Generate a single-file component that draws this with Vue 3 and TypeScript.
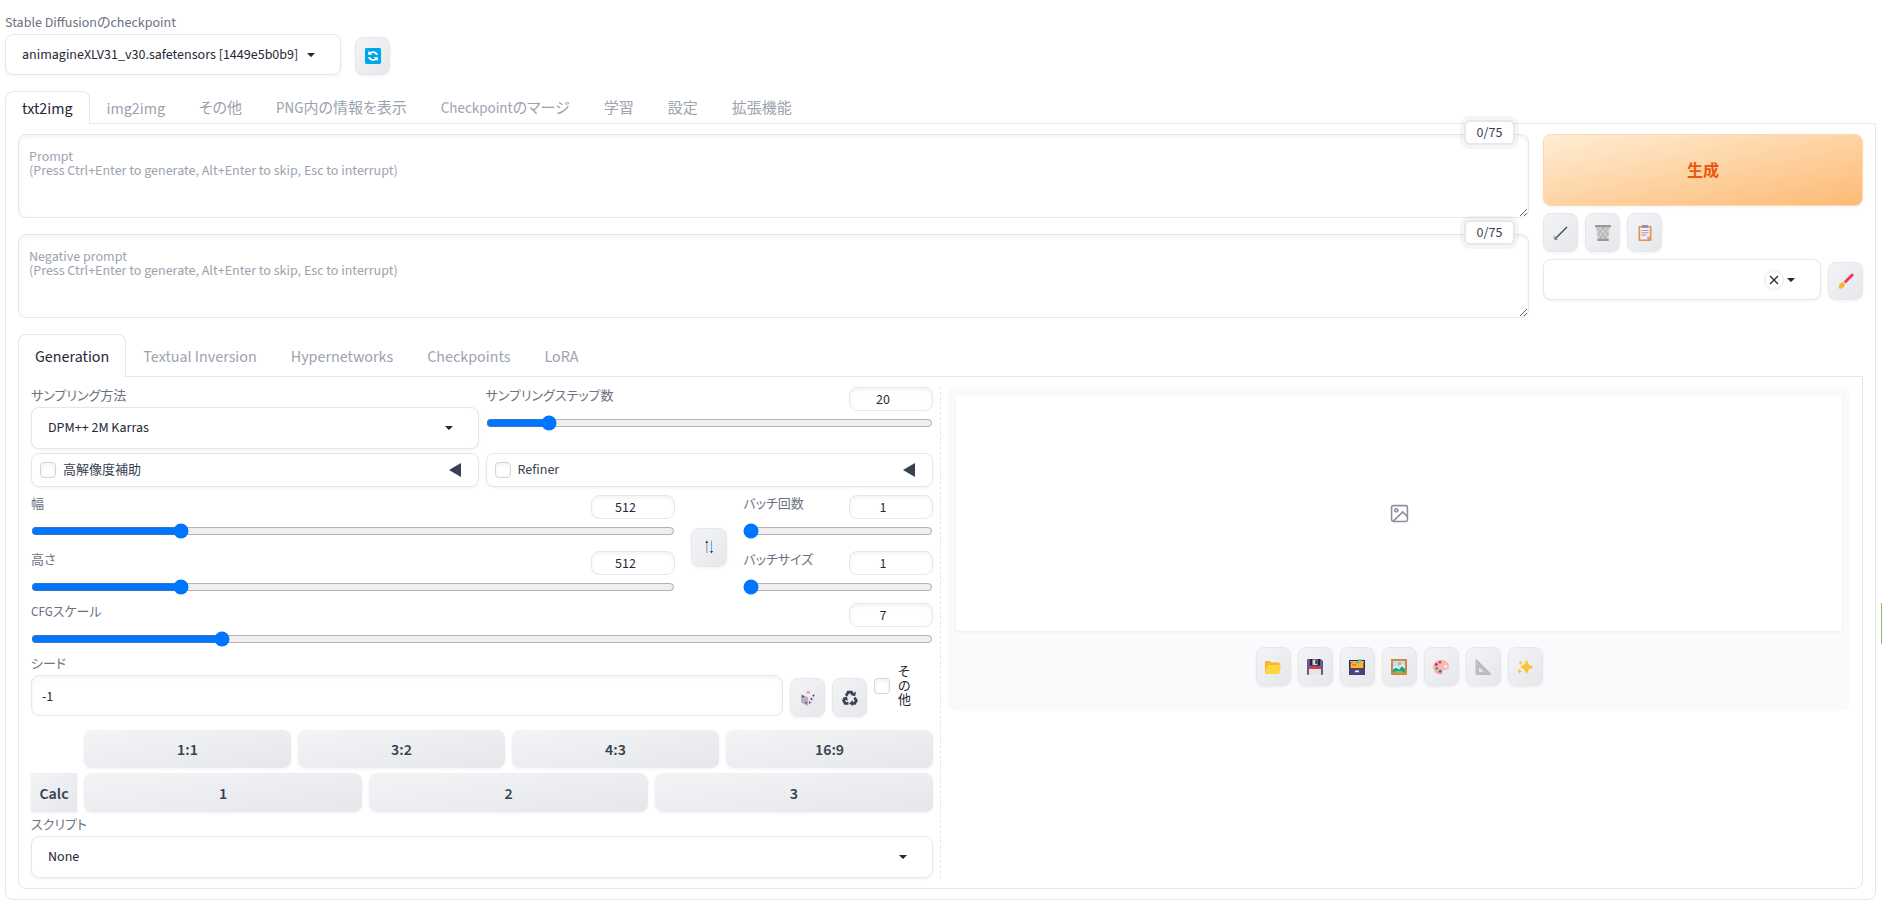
<script setup lang="ts">
import { ref, reactive } from 'vue'

interface SizeOption { label: string }
interface ToolButton { icon: string; title: string }
interface Tab { label: string; cjk?: boolean }

const checkpoint = ref('animagineXLV31_v30.safetensors [1449e5b0b9]')
const sampler = ref('DPM++ 2M Karras')
const script = ref('None')
const preset = ref('')
const prompt = ref('')
const negativePrompt = ref('')
const seed = ref('-1')

const values = reactive({ steps: 20, width: 512, height: 512, batchCount: 1, batchSize: 1, cfg: 7 })

const mainTabs: Tab[] = [
  { label: 'txt2img' },
  { label: 'img2img' },
  { label: 'その他', cjk: true },
  { label: 'PNG内の情報を表示', cjk: true },
  { label: 'Checkpointのマージ', cjk: true },
  { label: '学習', cjk: true },
  { label: '設定', cjk: true },
  { label: '拡張機能', cjk: true },
]
const activeMain = ref('txt2img')
const subTabs: string[] = ['Generation', 'Textual Inversion', 'Hypernetworks', 'Checkpoints', 'LoRA']
const activeSub = ref('Generation')

const hint = '(Press Ctrl+Enter to generate, Alt+Enter to skip, Esc to interrupt)'
const promptHint = `Prompt\n${hint}`
const negativeHint = `Negative prompt\n${hint}`

const promptTools: ToolButton[] = [
  { icon: 'arrow', title: 'Read generation parameters' },
  { icon: 'trash', title: 'Clear prompt' },
  { icon: 'clipboard', title: 'Apply style' },
]
const outputTools: ToolButton[] = [
  { icon: 'folder', title: 'Open output folder' },
  { icon: 'floppy', title: 'Save image' },
  { icon: 'archive', title: 'Save zip' },
  { icon: 'picture', title: 'Send to img2img' },
  { icon: 'palette', title: 'Send to inpaint' },
  { icon: 'triangle', title: 'Send to extras' },
  { icon: 'sparkles', title: 'Upscale' },
]
const ratios: SizeOption[] = [{ label: '1:1' }, { label: '3:2' }, { label: '4:3' }, { label: '16:9' }]
const slots: SizeOption[] = [{ label: '1' }, { label: '2' }, { label: '3' }]

function swapSize() {
  const w = values.width
  values.width = values.height
  values.height = w
}
</script>

<template>
  <div class="page">
    <svg class="sprite" aria-hidden="true">
      <symbol id="caret" viewBox="0 0 8 4"><path d="M0 0h8L4.6 3.6a.8.8 0 0 1-1.2 0z" fill="#1f2937" /></symbol>
      <symbol id="refresh" viewBox="0 0 16 16">
        <rect width="16" height="16" rx="1.4" fill="#00a6ed" />
        <path d="M3.2 6.8V3l1.5 1.3A5.1 5.1 0 0 1 12.9 7h-2A3.2 3.2 0 0 0 6 5.6l1.3 1.2z" fill="#fff" />
        <path d="M12.8 9.2V13l-1.5-1.3A5.1 5.1 0 0 1 3.1 9h2a3.2 3.2 0 0 0 4.9 1.4L8.700 9.2z" fill="#fff" />
      </symbol>
      <symbol id="arrow" viewBox="0 0 16 16">
        <path d="M14 2 2.500 13.500" stroke="#374151" stroke-width="1.2" fill="none" />
        <path d="M1.700 11.500v2.800h2.600" stroke="#4b6078" stroke-width=".9" fill="none" />
        <path d="M1.200 10.500v3.500" stroke="#e09a62" stroke-width=".9" />
      </symbol>
      <symbol id="trash" viewBox="0 0 16 16">
        <path d="M1 1.500h14L13.200 15H2.800z" fill="#d0d0d0" />
        <path d="m2.500 3 9 11M7 2l6.500 8M2.700 8 7 14M13.500 3l-9 11M9 2l-6.500 8M13.300 8 9 14" stroke="#a6a6a6" stroke-width=".8" />
        <path d="M0 0h16v2.200H0zM2.300 13.800h11.400V16H2.300z" fill="#999" />
      </symbol>
      <symbol id="clipboard" viewBox="0 0 16 16">
        <rect x="1.500" y="1" width="13" height="15" rx=".8" fill="#e19747" />
        <path d="M3.200 2.500h9.600v9L10.500 14.500H3.200z" fill="#f3eef8" />
        <path d="M12.800 11.500h-2.600v3z" fill="#b4acbc" />
        <path d="M5 0h6v3H5z" fill="#998ea4" />
        <path d="M4.500 5.500h7M4.500 7.800h7M4.500 10.100h5" stroke="#998ea4" stroke-width=".9" />
      </symbol>
      <symbol id="brush" viewBox="0 0 16 16">
        <path d="m5.500 8.700 7.800-8a1.500 1.500 0 0 1 2.100 2L7.500 10.800z" fill="#f92f60" />
        <path d="m4.700 9.300 1.200-1.100 2.200 2-1.200 1.300z" fill="#d3d3d3" />
        <path d="M.3 14.900c1 0 .8-1.300 1-2.700.3-3 4.800-3.600 5.300-.7.600 3.400-3.900 5.300-6.300 3.400z" fill="#ffb02e" />
      </symbol>
      <symbol id="swap" viewBox="0 0 16 16">
        <path d="M5.500 14V2" stroke="#e5a27e" stroke-width="1" />
        <path d="M6.200 14V2" stroke="#73b7e8" stroke-width=".7" />
        <path d="M4.200 4 5.800 1.500 7.400 4z" fill="#374151" />
        <path d="M10.500 1.500v12" stroke="#5eb0ed" stroke-width="1.100" />
        <path d="m8.900 12 1.600 2.500L12.100 12z" fill="#374151" />
      </symbol>
      <symbol id="dice" viewBox="0 0 16 16">
        <path d="M8 .5 15 4v8.500L8 16l-7-3.500V4z" fill="#e6dfec" />
        <path d="M1 4l7 3v9l-7-3.500z" fill="#b7adc4" />
        <path d="m1 4 7-3.500L15 4 8 7z" fill="#f4f0f6" />
        <path d="M6.500 1.500h3.400v2H6.500z" fill="#f48a91" />
        <g fill="#42386b">
          <circle cx="3" cy="6.500" r=".9" /><circle cx="6" cy="12.600" r=".9" />
          <circle cx="13.500" cy="5.500" r=".9" /><circle cx="11.500" cy="9" r=".9" /><circle cx="9.700" cy="12.500" r=".9" />
        </g>
      </symbol>
      <symbol id="recycle" viewBox="0 0 16 16">
        <g fill="none" stroke="#374151" stroke-width="2.800">
          <path d="m4 5.800 2.200-3.600h3.200l1.200 2" />
          <path d="m12.500 7.600 1.800 3-1.600 2.800h-2.400" />
          <path d="M6.500 13.400H3.200l-1.600-2.800 1.300-2.200" />
        </g>
        <path d="m8.400 5 4.800 1.300.8-4.900zM10.800 9.900l-3.600 3.500 3.600 2.600zM.3 8.100l4.600-1.500 1 4.500z" fill="#374151" />
      </symbol>
      <symbol id="folder" viewBox="0 0 16 16">
        <path d="M0 2.800C0 2.200.4 2 1 2h4l1.500 1.500h7c.6 0 1 .4 1 1V8L2 14.500H1a1 1 0 0 1-1-1z" fill="#ffb02e" />
        <path d="M3.800 6h11.300c.6 0 1 .5.800 1.100l-1.400 7c-.1.600-.5.900-1.100.9H1.200c-.7 0-1.100-.4-1-1l1.700-6.500C2.100 6.600 3 6 3.800 6z" fill="#fcd53f" />
      </symbol>
      <symbol id="floppy" viewBox="0 0 16 16">
        <path d="M0 1.200C0 .5.5 0 1.200 0h12.600L16 2v12.800c0 .7-.5 1.200-1.200 1.200H1.200C.5 16 0 15.500 0 14.800z" fill="#635994" />
        <path d="M3 0h10v6.500H3z" fill="#2b2038" />
        <path d="M5.500.5h5v5.500h-5z" fill="#d9d6dd" /><path d="M8.300 1h2v4h-2z" fill="#43364f" />
        <path d="M2 8h12v8H2z" fill="#e6e6e6" /><path d="M2 8h12v2H2z" fill="#f8312f" />
      </symbol>
      <symbol id="archive" viewBox="0 0 16 16">
        <path d="M0 1h16v14c0 .6-.4 1-1 1H1c-.6 0-1-.4-1-1z" fill="#33233f" />
        <path d="M1 2h14v1.500H1z" fill="#a9bde0" />
        <path d="M1.500 4.500 5 2.500h9.500V9h-13z" fill="#ffb02e" />
        <path d="M9 .5h4V2H9z" fill="#00d26a" /><path d="M3.500 5.200h3.500v1.200H3.500z" fill="#f8512f" /><path d="M7 3h3v1H7z" fill="#2fae8d" />
        <path d="M0 9h16v6c0 .6-.4 1-1 1H1c-.6 0-1-.4-1-1z" fill="#4d4075" />
        <path d="M5.200 11h5.600v3H5.200z" fill="#5d4d80" /><path d="M6.200 11.500h3.600v1.700H6.200z" fill="#fff" />
      </symbol>
      <symbol id="picture" viewBox="0 0 16 16">
        <path d="M0 0h16v16H0z" fill="#d3883e" /><path d="M2 2h12v12H2z" fill="#b6e3ff" />
        <path d="m2 9 3-2.500 3 3L11 5l3 3v6H2z" fill="#f5f5fa" />
        <path d="m2 10.500 3-2 3 2L11 7l3 3v4H2z" fill="#17a689" />
        <path d="M2 14c3-3 8-3 12 0z" fill="#86c440" /><circle cx="8.500" cy="4.500" r="1.800" fill="#ffa43d" />
      </symbol>
      <symbol id="palette" viewBox="0 0 16 16">
        <path d="M8 .800C3.500.800 0 4 0 8c0 4.200 3.300 7.200 7.200 7.200 1.500 0 2.500-.7 2.300-2-.2-1.500.5-2.300 2.200-2.200 2.600.2 4.300-.8 4.300-3.200C16 3.800 12.500.800 8 .800z" fill="#ffb7aa" />
        <path d="M2 12c1.200 2 3 3.200 5.200 3.200 1.500 0 2.500-.7 2.300-2z" fill="#f99d95" />
        <circle cx="7" cy="3.200" r="1.300" fill="#8d48a8" /><circle cx="3.300" cy="5.500" r="1.400" fill="#f50b86" />
        <circle cx="3.700" cy="9.500" r="1.400" fill="#20b765" /><circle cx="7.200" cy="12.200" r="1.400" fill="#2e6ee8" />
        <circle cx="12.500" cy="7.300" r="1.600" fill="#eeeff3" />
      </symbol>
      <symbol id="triangle" viewBox="0 0 16 16">
        <path fill-rule="evenodd" d="M.5.800c0-.6.600-.8 1-.4l14.100 14.200c.5.500.2 1.400-.5 1.400H1.200c-.4 0-.7-.3-.7-.7zM4 8.200v4.500h4.700z" fill="#bebdc1" />
        <path d="m2.500 1.500 12.500 13" stroke="#998ea4" stroke-width=".8" stroke-dasharray="1 1.200" />
      </symbol>
      <symbol id="sparkles" viewBox="0 0 16 16">
        <g fill="#fcc335">
          <path d="M9.500 1.200c.4 0 .6.400.8 1 .7 2.500 1.400 3.700 4.700 4.800.6.200 1 .5 1 1s-.4.800-1 1c-3.300 1.100-4 2.300-4.700 4.800-.2.600-.4 1-.8 1s-.6-.4-.8-1C8 11.300 7.300 10.100 4.500 9c-.6-.2-1-.5-1-1s.4-.8 1-1C7.300 5.900 8 4.700 8.700 2.200c.2-.6.400-1 .8-1z" />
          <path d="M3.500 1.500 4.200 3l1.600.7-1.600.7-.7 1.600-.7-1.600-1.600-.7L2.800 3zM2.500 9.500l.8 1.900 1.900.8-1.900.8-.8 1.900L1.700 13l-1.900-.8 1.900-.8z" />
        </g>
      </symbol>
    </svg>

    <header class="quick">
      <div class="field">
        <label for="ckpt">Stable Diffusionのcheckpoint</label>
        <div class="select ckpt">
          <select id="ckpt" v-model="checkpoint"><option>animagineXLV31_v30.safetensors [1449e5b0b9]</option></select>
          <svg class="caret"><use href="#caret" /></svg>
        </div>
      </div>
      <button class="tool" type="button" title="Refresh"><svg class="icon"><use href="#refresh" /></svg></button>
    </header>

    <nav class="tabs main-tabs" role="tablist">
      <button v-for="t in mainTabs" :key="t.label" type="button" role="tab" :aria-selected="t.label === activeMain" :class="{ active: t.label === activeMain, cjk: t.cjk }" @click="activeMain = t.label">{{ t.label }}</button>
    </nav>

    <main class="panel outer">
      <section class="top">
        <div class="prompts">
          <div class="prompt">
            <textarea v-model="prompt" aria-label="Prompt" :placeholder="promptHint"></textarea>
            <span class="counter">0/75</span>
          </div>
          <div class="prompt">
            <textarea v-model="negativePrompt" aria-label="Negative prompt" :placeholder="negativeHint"></textarea>
            <span class="counter">0/75</span>
          </div>
        </div>
        <div class="actions">
          <button class="generate" type="button">生成</button>
          <div class="tools">
            <button v-for="b in promptTools" :key="b.icon" class="tool" type="button" :title="b.title"><svg class="icon"><use :href="'#' + b.icon" /></svg></button>
          </div>
          <div class="styles">
            <div class="select">
              <select v-model="preset" aria-label="Styles"><option value=""></option></select>
              <button class="clear" type="button" aria-label="Clear styles">
                <svg viewBox="0 0 10 10"><path d="m1 1 8 8M9 1 1 9" stroke="#1f2937" stroke-width="1.300" /></svg>
              </button>
              <svg class="caret"><use href="#caret" /></svg>
            </div>
            <button class="tool" type="button" title="Edit styles"><svg class="icon"><use href="#brush" /></svg></button>
          </div>
        </div>
      </section>

      <nav class="tabs sub-tabs" role="tablist">
        <button v-for="t in subTabs" :key="t" type="button" role="tab" :aria-selected="t === activeSub" :class="{ active: t === activeSub }" @click="activeSub = t">{{ t }}</button>
      </nav>

      <section class="panel inner">
        <div class="settings">
          <div class="pair">
            <div class="field kana">
              <label for="sampler">サンプリング方法</label>
              <div class="select">
                <select id="sampler" v-model="sampler"><option>DPM++ 2M Karras</option></select>
                <svg class="caret"><use href="#caret" /></svg>
              </div>
            </div>
            <div class="slider">
              <label for="steps">サンプリングステップ数</label>
              <input id="steps" v-model.number="values.steps" type="number">
              <input v-model.number="values.steps" type="range" min="1" max="150" aria-label="サンプリングステップ数">
            </div>
          </div>

          <div class="pair">
            <div class="accordion kana">
              <label><input type="checkbox">高解像度補助</label>
              <button type="button" aria-label="高解像度補助"><svg viewBox="0 0 12 14"><path d="M0 7 12 0v14z" fill="#374151" /></svg></button>
            </div>
            <div class="accordion">
              <label><input type="checkbox">Refiner</label>
              <button type="button" aria-label="Refiner"><svg viewBox="0 0 12 14"><path d="M0 7 12 0v14z" fill="#374151" /></svg></button>
            </div>
          </div>

          <div class="dims">
            <div class="stack">
              <div class="slider">
                <label for="w">幅</label>
                <input id="w" v-model.number="values.width" type="number">
                <input v-model.number="values.width" type="range" min="64" max="2048" step="8" aria-label="幅">
              </div>
              <div class="slider">
                <label for="h">高さ</label>
                <input id="h" v-model.number="values.height" type="number">
                <input v-model.number="values.height" type="range" min="64" max="2048" step="8" aria-label="高さ">
              </div>
            </div>
            <button class="tool" type="button" title="Swap" @click="swapSize"><svg class="icon"><use href="#swap" /></svg></button>
            <div class="stack">
              <div class="slider">
                <label for="bc">バッチ回数</label>
                <input id="bc" v-model.number="values.batchCount" type="number">
                <input v-model.number="values.batchCount" type="range" min="1" max="100" aria-label="バッチ回数">
              </div>
              <div class="slider">
                <label for="bs">バッチサイズ</label>
                <input id="bs" v-model.number="values.batchSize" type="number">
                <input v-model.number="values.batchSize" type="range" min="1" max="8" aria-label="バッチサイズ">
              </div>
            </div>
          </div>

          <div class="slider cfg">
            <label for="cfg">CFGスケール</label>
            <input id="cfg" v-model.number="values.cfg" type="number">
            <input v-model.number="values.cfg" type="range" min="1" max="30" aria-label="CFGスケール">
          </div>

          <div class="seed">
            <div class="field kana">
              <label for="seed">シード</label>
              <input id="seed" v-model="seed" class="text" type="text">
            </div>
            <button class="tool" type="button" title="Random seed"><svg class="icon"><use href="#dice" /></svg></button>
            <button class="tool" type="button" title="Reuse seed"><svg class="icon"><use href="#recycle" /></svg></button>
            <label class="extra"><input type="checkbox"><span>その他</span></label>
          </div>

          <div class="ratio-row">
            <span></span>
            <button v-for="r in ratios" :key="r.label" class="wide" type="button">{{ r.label }}</button>
          </div>
          <div class="calc-row">
            <button class="wide calc" type="button">Calc</button>
            <button v-for="s in slots" :key="s.label" class="wide" type="button">{{ s.label }}</button>
          </div>

          <div class="field kana script">
            <label for="script">スクリプト</label>
            <div class="select">
              <select id="script" v-model="script"><option>None</option></select>
              <svg class="caret"><use href="#caret" /></svg>
            </div>
          </div>
        </div>

        <div class="divider"></div>

        <div class="output">
          <div class="gallery">
            <svg viewBox="0 0 24 24" fill="none" stroke="#8b919d" stroke-width="2">
              <rect x="2" y="2" width="20" height="20" rx="2" /><circle cx="8" cy="8" r="2" /><path d="m4 22 12-12 6 6" />
            </svg>
          </div>
          <div class="tools">
            <button v-for="b in outputTools" :key="b.icon" class="tool" type="button" :title="b.title"><svg class="icon"><use :href="'#' + b.icon" /></svg></button>
          </div>
        </div>
      </section>
    </main>
    <div class="edge-mark"></div>
  </div>
</template>

<style>
body { background: #fff; }
</style>

<style scoped>
.page {
  --line: #e5e7eb;
  --ink: #1f2937;
  --soft: #6b7280;
  --mute: #9ca3af;
  --shade: 0 1px 3px rgba(0, 0, 0, 0.06);
  --grey: linear-gradient(to bottom right, #f3f4f6, #e5e7eb);
  padding: 14px 6px 6px 5px;
  color: var(--ink);
  font-family: "Source Sans Pro", "Source Sans 3", "Noto Sans CJK JP", sans-serif;
  font-size: 14px;
  line-height: 16px;
  font-feature-settings: "palt";
}
.page *, .page *::before { box-sizing: border-box; }
.sprite { position: absolute; width: 0; height: 0; }
button, input, select, textarea { font: inherit; color: inherit; margin: 0; font-feature-settings: inherit; }
button { padding: 0; border: 0; background: none; cursor: pointer; }

.quick { display: flex; align-items: flex-end; gap: 14px; margin-bottom: 16px; }
.field { display: flex; flex-direction: column; min-width: 0; }
.field > label { height: 20px; padding-top: 1px; color: var(--soft); }
.kana > label, .slider label { font-size: 13px; }
.select { display: grid; align-items: center; }
.select > * { grid-area: 1 / 1; }
.select select {
  width: 100%;
  height: 42px;
  padding: 0 36px 0 16px;
  appearance: none;
  border: 1px solid var(--line);
  border-radius: 8px;
  background: #fff;
  box-shadow: var(--shade);
}
.quick .select select, .styles .select select { height: 41px; }
.ckpt { width: 336px; }
.caret { justify-self: end; width: 8px; height: 4px; margin-right: 26px; pointer-events: none; }
.clear {
  justify-self: end;
  display: grid;
  place-items: center;
  width: 20px;
  height: 20px;
  margin-right: 37px;
  border: 1px solid var(--line);
  border-radius: 50%;
}
.clear svg { width: 10px; height: 10px; }
.tool {
  display: grid;
  place-items: center;
  flex: none;
  width: 35px;
  height: 38px;
  border: 1px solid var(--line);
  border-radius: 8px;
  background: var(--grey);
  box-shadow: var(--shade);
}
.icon { width: 16px; height: 16px; }

.tabs { display: flex; position: relative; z-index: 1; margin-bottom: -1px; }
.tabs button {
  height: 33px;
  padding: 2px 16px 0;
  border: 1px solid transparent;
  border-bottom: 0;
  border-radius: 8px 8px 0 0;
  color: var(--mute);
  font-size: 16px;
  white-space: nowrap;
}
.tabs button.cjk { font-size: 15px; }
.tabs button.active { border-color: var(--line); background: #fff; color: var(--ink); }
.sub-tabs { margin-top: 16px; }
.sub-tabs button { height: 43px; }
.panel { border: 1px solid var(--line); border-radius: 0 0 8px 8px; }
.outer { padding: 10px 12px; }
.inner { display: grid; grid-template-columns: 1fr 1px 1fr; gap: 7px; padding: 10px 12px; }

.top { display: grid; grid-template-columns: 1fr 320px; gap: 14px; align-items: start; }
.prompts { display: grid; gap: 16px; }
.prompt { position: relative; }
.prompt textarea {
  display: block;
  width: 100%;
  height: 84px;
  padding: 15px 10px;
  border: 1px solid var(--line);
  border-radius: 8px;
  background: #fff;
  box-shadow: inset 0 2px 4px rgba(0, 0, 0, 0.05);
  line-height: 14px;
  resize: vertical;
}
textarea::placeholder { color: var(--mute); opacity: 1; }
.counter {
  position: absolute;
  top: -14px;
  right: 14px;
  width: 51px;
  padding: 4px 0 2px;
  border: 2px solid var(--line);
  border-radius: 6px;
  background: #fff;
  box-shadow: 0 0 0 4px rgba(0, 0, 0, 0.04);
  color: #374151;
  line-height: 15px;
  text-align: center;
}
.actions { display: grid; gap: 7px; }
.generate {
  height: 72px;
  padding-top: 2px;
  border: 1px solid #fed7aa;
  border-radius: 8px;
  background: linear-gradient(to bottom right, #ffedd5, #fdba74);
  box-shadow: var(--shade);
  color: #ea580c;
  font-size: 16px;
  font-weight: 600;
}
.tools { display: flex; gap: 7px; }
.tools .tool { height: 39px; }
.styles { display: grid; grid-template-columns: 1fr auto; gap: 7px; align-items: end; }

.settings { min-width: 0; }
.pair { display: grid; grid-template-columns: 1fr 1fr; gap: 7px; margin-bottom: 4px; }
.slider { display: grid; grid-template-columns: 1fr 84px; align-content: start; row-gap: 4px; min-width: 0; }
.slider label { padding-top: 1px; color: var(--soft); white-space: nowrap; }
.slider input[type="number"] {
  width: 84px;
  height: 24px;
  padding: 1px 16px 0 0;
  border: 1px solid var(--line);
  border-radius: 8px;
  background: #fff;
  box-shadow: inset 0 2px 4px rgba(0, 0, 0, 0.05);
  text-align: center;
  appearance: textfield;
}
.slider input[type="number"]::-webkit-inner-spin-button { appearance: none; }
.slider input[type="range"] { grid-column: 1 / -1; width: 100%; height: 16px; }
.accordion {
  display: flex;
  align-items: center;
  justify-content: space-between;
  height: 34px;
  padding: 0 17px 0 8px;
  border: 1px solid var(--line);
  border-radius: 8px;
  box-shadow: var(--shade);
  color: #374151;
}
.accordion label { display: flex; align-items: center; gap: 7px; }
.accordion svg { display: block; width: 12px; height: 14px; }
input[type="checkbox"] {
  flex: none;
  width: 16px;
  height: 16px;
  appearance: none;
  border: 1px solid #d1d5db;
  border-radius: 4px;
  background: #fff;
  box-shadow: inset 0 2px 4px rgba(0, 0, 0, 0.05);
}
input[type="checkbox"]:checked { background: #0075ff; }
.dims { display: grid; grid-template-columns: 17fr 36px 5fr; gap: 16px; align-items: center; margin-top: 8px; }
.dims > .tool { width: 36px; height: 39px; margin-top: 4px; }
.stack { display: grid; gap: 12px; }
.cfg { margin-top: 8px; }
.seed { display: flex; align-items: flex-end; gap: 7px; height: 62px; margin-top: 8px; }
.seed .field { flex: 1; align-self: flex-start; }
.seed .tool { height: 39px; }
.text {
  height: 41px;
  padding: 2px 10px 0;
  border: 1px solid var(--line);
  border-radius: 8px;
  box-shadow: inset 0 2px 4px rgba(0, 0, 0, 0.05);
}
.extra { display: flex; align-items: center; gap: 8px; align-self: center; width: 59px; }
.extra span { width: 14px; font-size: 13px; line-height: 14px; word-break: break-all; }
.ratio-row, .calc-row { display: grid; gap: 7px; }
.ratio-row { grid-template-columns: 46px repeat(4, 1fr); margin-top: 13px; }
.calc-row { grid-template-columns: 46px repeat(3, 1fr); margin-top: 5px; }
.wide {
  height: 38px;
  padding-top: 2px;
  border-radius: 8px;
  background: var(--grey);
  box-shadow: var(--shade);
  color: #374151;
  font-size: 16px;
  font-weight: 600;
}
.calc-row .wide { height: 39px; }
.calc-row .calc { border-radius: 0; }
.script { margin-top: 4px; }
.divider { border-left: 1px dashed var(--line); }
.output { align-self: start; height: 324px; padding: 8px; border-radius: 8px; background: #f9fafb; }
.gallery { display: grid; place-items: center; height: 236px; background: #fff; box-shadow: var(--shade); }
.gallery svg { width: 19px; height: 19px; }
.output .tools { justify-content: center; margin-top: 16px; }
.edge-mark { position: fixed; top: 603px; right: 0; width: 1px; height: 41px; background: #8bc34a; }
</style>
